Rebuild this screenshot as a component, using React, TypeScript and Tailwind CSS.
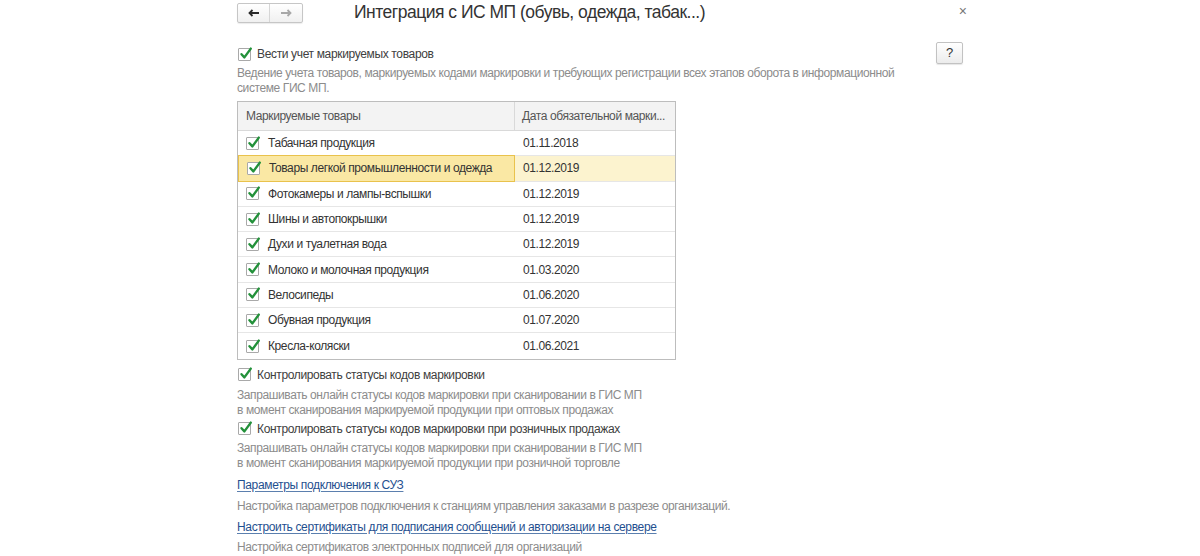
import React from 'react';

const goods = [
  { name: 'Табачная продукция', date: '01.11.2018' },
  { name: 'Товары легкой промышленности и одежда', date: '01.12.2019', active: true },
  { name: 'Фотокамеры и лампы-вспышки', date: '01.12.2019' },
  { name: 'Шины и автопокрышки', date: '01.12.2019' },
  { name: 'Духи и туалетная вода', date: '01.12.2019' },
  { name: 'Молоко и молочная продукция', date: '01.03.2020' },
  { name: 'Велосипеды', date: '01.06.2020' },
  { name: 'Обувная продукция', date: '01.07.2020' },
  { name: 'Кресла-коляски', date: '01.06.2021' },
];

function Check() {
  return (
    <span className="relative inline-block w-[13px] h-[13px] shrink-0 border border-[#a9a9a9] bg-white rounded-[1px]">
      <svg className="absolute left-[0px] top-[-3px]" width="14" height="15" viewBox="0 0 14 15">
        <path d="M2.5 8.2 L5.4 11.4 L11.8 2.6" fill="none" stroke="#23913a" strokeWidth="2.4" strokeLinecap="round" strokeLinejoin="round" />
      </svg>
    </span>
  );
}

function Hint({ children }: { children: React.ReactNode }) {
  return <div className="text-[12px] leading-[15px] tracking-[-0.4px] text-[#8c8c8c]">{children}</div>;
}

export default function App() {
  return (
    <div className="w-[1200px] h-[556px] bg-white overflow-hidden font-['Liberation_Sans',Arial,sans-serif] text-[#404040]">
      <div className="mx-auto w-[726px]">
        {/* Header */}
        <div className="flex items-center h-[25px] pt-[1px]">
          <div className="flex h-[20px] border border-[#c6c6c6] rounded-[2px] bg-gradient-to-b from-white to-[#f0f0f0] shadow-[0_1px_1px_rgba(0,0,0,0.08)]">
            <button className="w-[32px] flex items-center justify-center border-r border-[#d6d6d6]">
              <svg width="12" height="8" viewBox="0 0 12 8">
                <path d="M11 4 H2 M4.5 1 L1.5 4 L4.5 7" fill="none" stroke="#2a2a2a" strokeWidth="1.8" />
              </svg>
            </button>
            <button className="w-[32px] flex items-center justify-center">
              <svg width="12" height="8" viewBox="0 0 12 8">
                <path d="M1 4 H10 M7.5 1 L10.5 4 L7.5 7" fill="none" stroke="#a8a8a8" strokeWidth="1.8" />
              </svg>
            </button>
          </div>
          <div className="ml-[51px] -mt-[2px] text-[17.5px] tracking-[-0.5px] text-[#333] leading-[22px]">Интеграция с ИС МП (обувь, одежда, табак...)</div>
          <div className="ml-auto mr-[-4px] -mt-[5px] text-[14px] text-[#777] leading-none">×</div>
        </div>

        {/* Main option */}
        <div className="flex items-start justify-between mt-[22px]">
          <label className="flex items-center gap-[6px] text-[12px] tracking-[-0.35px] leading-[14px] pl-[1px]">
            <Check />
            <span>Вести учет маркируемых товаров</span>
          </label>
          <button className="w-[27px] h-[22px] -mt-[5px] border border-[#c2c2c2] rounded-[2px] bg-gradient-to-b from-white to-[#ececec] text-[13px] text-[#333] shadow-[0_1px_1px_rgba(0,0,0,0.1)]">?</button>
        </div>
        <div className="mt-[2px] w-[660px]">
          <Hint>Ведение учета товаров, маркируемых кодами маркировки и требующих регистрации всех этапов оборота в информационной системе ГИС МП.</Hint>
        </div>

        {/* Table */}
        <div className="mt-[5px] w-[439px] border border-[#bdbdbd] text-[12px] tracking-[-0.4px]">
          <div className="flex h-[29px] bg-[#f3f3f3] border-b border-[#d9d9d9] text-[#555]">
            <div className="w-[277px] flex items-center pl-[8px] border-r border-[#d9d9d9]">Маркируемые товары</div>
            <div className="flex-1 flex items-center pl-[7px] whitespace-nowrap">Дата обязательной марки...</div>
          </div>
          {goods.map((g, i) => (
            <div
              key={g.name}
              className={`flex h-[25.3px] ${i < goods.length - 1 ? 'border-b border-[#e6e6e6]' : ''} ${g.active ? 'bg-[#fcf3cf]' : 'bg-white'}`}
            >
              <div
                className={`w-[277px] flex items-center gap-[9px] pl-[8px] ${g.active ? 'bg-[#fae8a4] border border-[#e9c24c] -my-[1px]' : ''}`}
              >
                <Check />
                <span className="text-[#333]">{g.name}</span>
              </div>
              <div className="flex-1 flex items-center pl-[8px] text-[#333]">{g.date}</div>
            </div>
          ))}
        </div>

        {/* Status control */}
        <label className="flex items-center gap-[6px] mt-[8px] text-[12px] tracking-[-0.35px] leading-[14px] pl-[1px]">
          <Check />
          <span>Контролировать статусы кодов маркировки</span>
        </label>
        <div className="mt-[6px]">
          <Hint>Запрашивать онлайн статусы кодов маркировки при сканировании в ГИС МП</Hint>
          <Hint>в момент сканирования маркируемой продукции при оптовых продажах</Hint>
        </div>

        <label className="flex items-center gap-[6px] mt-[4px] text-[12px] tracking-[-0.35px] leading-[14px] pl-[1px]">
          <Check />
          <span>Контролировать статусы кодов маркировки при розничных продажах</span>
        </label>
        <div className="mt-[5px]">
          <Hint>Запрашивать онлайн статусы кодов маркировки при сканировании в ГИС МП</Hint>
          <Hint>в момент сканирования маркируемой продукции при розничной торговле</Hint>
        </div>

        {/* Links */}
        <a className="block mt-[7px] text-[12px] tracking-[-0.35px] leading-[15px] text-[#1f4f8f] underline underline-offset-2 decoration-[#5b7fae]">Параметры подключения к СУЗ</a>
        <div className="mt-[6px]">
          <Hint>Настройка параметров подключения к станциям управления заказами в разрезе организаций.</Hint>
        </div>
        <a className="block mt-[6px] text-[12px] tracking-[-0.35px] leading-[15px] text-[#1f4f8f] underline underline-offset-2 decoration-[#5b7fae]">Настроить сертификаты для подписания сообщений и авторизации на сервере</a>
        <div className="mt-[5px]">
          <Hint>Настройка сертификатов электронных подписей для организаций</Hint>
        </div>
      </div>
    </div>
  );
}
